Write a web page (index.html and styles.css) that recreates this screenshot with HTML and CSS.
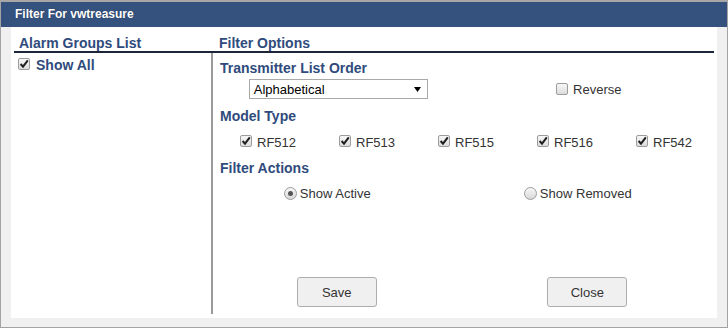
FILE: index.html
```html
<!DOCTYPE html>
<html lang="en">
<head>
    <meta charset="UTF-8">
    <meta name="viewport" content="width=device-width, initial-scale=1.0">
    <title>Filter For vwtreasure</title>
    <link rel="stylesheet" href="styles.css">
</head>
<body>
    <div class="dialog">
        <div class="dialog-title">Filter For vwtreasure</div>
        <div class="dialog-body">
            <div class="panel">
                <div class="filter-table">
                    <div class="col-head groups-head">Alarm Groups List</div>
                    <div class="col-head options-head">Filter Options</div>

                    <div class="groups">
                        <label class="chk-label group-item">
                            <span class="chk checked">
                                <svg width="12" height="12" viewBox="0 0 12 12"><path d="M2.6 6 L5 8.6 L9.8 2.4" /></svg>
                            </span>
                            Show All
                        </label>
                    </div>

                    <div class="options">
                        <div class="opt-head">Transmitter List Order</div>
                        <div class="half-row order-row">
                            <div class="cell">
                                <div class="select">
                                    <span class="select-text">Alphabetical</span>
                                    <svg class="select-arrow" width="7" height="5" viewBox="0 0 7 5"><polygon points="0,0 7,0 3.5,5" /></svg>
                                </div>
                            </div>
                            <div class="cell">
                                <label class="chk-label reverse">
                                    <span class="chk"></span>
                                    Reverse
                                </label>
                            </div>
                        </div>

                        <div class="opt-head model-head">Model Type</div>
                        <div class="model-row">
                            <label class="chk-label model-item"><span class="chk checked"><svg width="12" height="12" viewBox="0 0 12 12"><path d="M2.6 6 L5 8.6 L9.8 2.4" /></svg></span>RF512</label>
                            <label class="chk-label model-item"><span class="chk checked"><svg width="12" height="12" viewBox="0 0 12 12"><path d="M2.6 6 L5 8.6 L9.8 2.4" /></svg></span>RF513</label>
                            <label class="chk-label model-item"><span class="chk checked"><svg width="12" height="12" viewBox="0 0 12 12"><path d="M2.6 6 L5 8.6 L9.8 2.4" /></svg></span>RF515</label>
                            <label class="chk-label model-item"><span class="chk checked"><svg width="12" height="12" viewBox="0 0 12 12"><path d="M2.6 6 L5 8.6 L9.8 2.4" /></svg></span>RF516</label>
                            <label class="chk-label model-item"><span class="chk checked"><svg width="12" height="12" viewBox="0 0 12 12"><path d="M2.6 6 L5 8.6 L9.8 2.4" /></svg></span>RF542</label>
                        </div>

                        <div class="opt-head actions-head">Filter Actions</div>
                        <div class="half-row action-row">
                            <div class="cell">
                                <label class="radio-label"><span class="radio on"></span>Show Active</label>
                            </div>
                            <div class="cell">
                                <label class="radio-label"><span class="radio"></span>Show Removed</label>
                            </div>
                        </div>

                        <div class="half-row button-row">
                            <div class="cell"><button class="btn">Save</button></div>
                            <div class="cell"><button class="btn">Close</button></div>
                        </div>
                    </div>
                </div>
            </div>
        </div>
    </div>
</body>
</html>
```

FILE: styles.css
```css
* {
    margin: 0;
    padding: 0;
    box-sizing: border-box;
}

body {
    background: #a6a6a6;
    padding-top: 2px;
    font-family: "Liberation Sans", Arial, sans-serif;
    font-size: 13px;
    color: #333;
}

.dialog {
    width: 728px;
    background: #f0f0f0;
    border: 1px solid #a3a3a3;
    border-top: none;
}

.dialog-title {
    height: 25px;
    line-height: 25px;
    padding-left: 14px;
    background: #35517e;
    color: white;
    font-size: 12px;
    font-weight: bold;
    text-shadow: 0 0 1px rgba(0, 0, 0, 0.35);
}

.dialog-body {
    padding: 0 10px 9px;
}

.panel {
    height: 291px;
    background: white;
    padding: 0 3px 4px;
}

.filter-table {
    display: grid;
    grid-template-columns: 199px 501px;
    grid-template-rows: 26px 1fr;
    height: 100%;
}

.col-head {
    padding-top: 8px;
    line-height: 16px;
    font-size: 14px;
    font-weight: bold;
    color: #2f4b7c;
    border-bottom: 2px solid #1d2538;
}

.groups-head {
    padding-left: 5px;
}

.options-head {
    padding-left: 6px;
}

.groups {
    border-right: 2px solid #9a9a9a;
    padding: 3px 0 0 4px;
}

.chk-label {
    display: flex;
    align-items: flex-start;
    line-height: 18px;
}

.chk {
    width: 12px;
    height: 12px;
    margin-top: 1px;
    margin-right: 5px;
    border: 1px solid #9c9c9c;
    border-radius: 2px;
    background: linear-gradient(#f7f7f7, #dcdcdc);
    flex-shrink: 0;
}

.chk svg {
    display: block;
    margin: -1px 0 0 -1px;
    overflow: visible;
}

.chk svg path {
    fill: none;
    stroke: #1e1e1e;
    stroke-width: 2;
}

.group-item {
    font-size: 14px;
    font-weight: bold;
    color: #2f4b7c;
}

.group-item .chk {
    margin-top: 2px;
    margin-right: 6px;
}

.options {
    display: flex;
    flex-direction: column;
    padding-top: 7px;
}

.opt-head {
    padding-left: 7px;
    line-height: 16px;
    font-size: 14px;
    font-weight: bold;
    color: #2f4b7c;
}

.half-row {
    display: grid;
    grid-template-columns: 1fr 1fr;
}

.cell {
    display: flex;
    justify-content: center;
    align-items: flex-start;
}

.order-row {
    margin-top: 3px;
    height: 20px;
}

.select {
    width: 179px;
    height: 20px;
    border: 1px solid #a9a9a9;
    background: white;
    display: flex;
    align-items: center;
    justify-content: space-between;
    padding: 0 6px 0 4px;
    color: #000;
}

.select-text {
    padding-top: 2px;
    line-height: 16px;
}

.select-arrow {
    display: block;
}

.reverse {
    padding-top: 2px;
}

.reverse .chk {
    margin-top: 2px;
}

.model-head {
    margin-top: 9px;
}

.model-row {
    display: flex;
    margin-top: 10px;
    padding-left: 27px;
}

.model-item {
    flex: none;
    width: 99px;
}

.actions-head {
    margin-top: 8px;
}

.action-row {
    margin-top: 9px;
}

.action-row .cell {
    padding-right: 22px;
}

.radio-label {
    display: flex;
    align-items: flex-start;
    line-height: 18px;
}

.radio {
    width: 13px;
    height: 13px;
    margin-top: 2px;
    margin-right: 3px;
    border: 1px solid #9c9c9c;
    border-radius: 50%;
    background: linear-gradient(#f7f7f7, #d8d8d8);
    display: flex;
    align-items: center;
    justify-content: center;
}

.radio.on::after {
    content: "";
    width: 5px;
    height: 5px;
    border-radius: 50%;
    background: #555;
}

.button-row {
    margin-top: auto;
    padding-bottom: 7px;
}

.button-row .cell {
    padding-right: 3px;
}

.btn {
    width: 80px;
    height: 30px;
    border: 1px solid #adadad;
    border-radius: 3px;
    background: #f0f0f0;
    font-family: inherit;
    font-size: 13px;
    color: #333;
    cursor: pointer;
}
```
